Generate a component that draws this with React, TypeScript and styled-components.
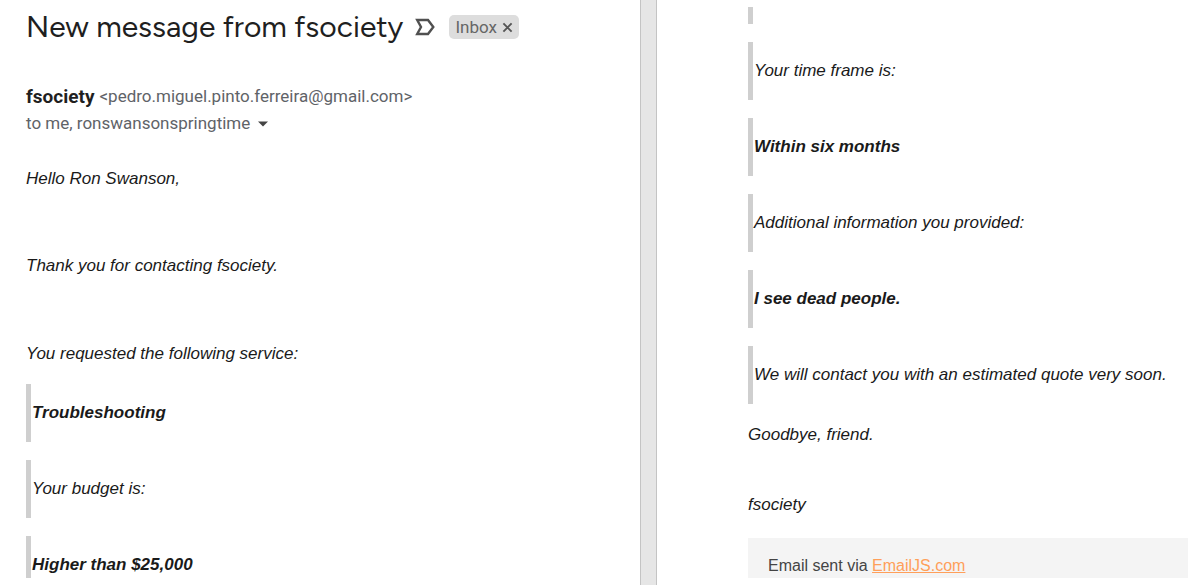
import React from "react";
import styled, { createGlobalStyle } from "styled-components";

const GlobalStyle = createGlobalStyle`
  *, *::before, *::after { box-sizing: border-box; }
  body { margin: 0; background: #fff; }
`;

const Page = styled.main`
  display: grid;
  grid-template-columns: 640fr 17px 531fr;
  min-height: 100vh;
  color: #1a1a1a;
  font: 17px/22px "Liberation Sans", Arial, sans-serif;
`;

const MessagePane = styled.section`
  min-width: 0;
  padding: 8px 24px 7px 26px;
`;

const ContinuedPane = styled.section`
  min-width: 0;
  padding: 7px 0 7px 91px;
`;

const Divider = styled.div`
  background: #e6e6e6;
  border: solid #c4c4c4;
  border-width: 0 1px;
`;

const TitleRow = styled.header`
  display: flex;
  align-items: center;
  height: 38px;
`;

const Title = styled.h1`
  margin: 0;
  color: #1f1f1f;
  font: 400 30px/38px "Google Sans", Figtree, Roboto, sans-serif;
  white-space: nowrap;
`;

const MarkerButton = styled.button`
  display: flex;
  margin: 0 14px 0 12px;
  padding: 0;
  border: 0;
  background: none;
`;

const InboxChip = styled.span`
  display: flex;
  align-items: center;
  gap: 5px;
  height: 24px;
  padding: 0 6px;
  border-radius: 5px;
  background: #ddd;
  color: #666;
  font: 17px/24px Roboto, sans-serif;
`;

const ChipRemove = styled.button`
  display: flex;
  padding: 0;
  border: 0;
  background: none;
`;

const Sender = styled.div`
  margin-top: 37px;
  color: #5f6368;
  font: 17px/27px Roboto, sans-serif;
  white-space: nowrap;
`;

const SenderLine = styled.div`
  display: flex;
  align-items: center;
`;

const SenderName = styled.strong`
  margin-right: 5px;
  color: #1f1f1f;
  font-size: 19px;
`;

const DetailsButton = styled.button`
  display: flex;
  margin-left: 8px;
  padding: 0;
  border: 0;
  background: none;
`;

const Paragraph = styled.p<{ $after: number }>`
  margin: 0 0 ${(p) => p.$after}px;
  font-style: italic;
  white-space: nowrap;
`;

const LeftBody = styled.div`
  margin-top: 31px;
`;

const QuoteList = styled.div`
  display: flex;
  flex-direction: column;
  gap: 18px;
`;

const Quote = styled.blockquote<{ $strong?: boolean; $cut?: boolean }>`
  margin: 0;
  padding: 18px 0 ${(p) => (p.$cut ? 2 : 18)}px 1px;
  border-left: 5px solid #cfcfcf;
  font-style: italic;
  font-weight: ${(p) => (p.$strong ? 700 : 400)};
  white-space: nowrap;
`;

const QuoteTail = styled.div`
  height: 17px;
  border-left: 5px solid #cfcfcf;
`;

const Closing = styled.div`
  margin-top: 20px;
`;

const Footer = styled.footer`
  padding: 17px 20px 1px;
  background: #f4f4f4;
  color: #444;
  font-size: 16px;
`;

const FooterLink = styled.a`
  color: #ff9f5a;
  text-decoration: underline;
`;

export default function App() {
  return (
    <>
      <GlobalStyle />
      <Page>
        <MessagePane>
          <TitleRow>
            <Title>New message from fsociety</Title>
            <MarkerButton aria-label="Mark as important">
              <svg width="20" height="18" viewBox="0 0 20 18" fill="none" stroke="#505050" strokeWidth="2.4">
                <path d="M2.2 2H13L18.3 9L13 16H2.2L6 9Z" />
              </svg>
            </MarkerButton>
            <InboxChip>
              Inbox
              <ChipRemove aria-label="Remove Inbox label">
                <svg width="11" height="11" viewBox="0 0 11 11" stroke="#555" strokeWidth="1.9">
                  <path d="M1.4 1.4L9.6 9.6M9.6 1.4L1.4 9.6" />
                </svg>
              </ChipRemove>
            </InboxChip>
          </TitleRow>
          <Sender>
            <SenderLine>
              <SenderName>fsociety</SenderName>
              <span>&lt;pedro.miguel.pinto.ferreira@gmail.com&gt;</span>
            </SenderLine>
            <SenderLine>
              to me, ronswansonspringtime
              <DetailsButton aria-label="Show details">
                <svg width="10" height="6" viewBox="0 0 10 6" fill="#444">
                  <path d="M0 0.5H10L5 5.5Z" />
                </svg>
              </DetailsButton>
            </SenderLine>
          </Sender>
          <LeftBody>
            <Paragraph $after={65}>Hello Ron Swanson,</Paragraph>
            <Paragraph $after={66}>Thank you for contacting fsociety.</Paragraph>
            <Paragraph $after={19}>You requested the following service:</Paragraph>
            <QuoteList>
              <Quote $strong>Troubleshooting</Quote>
              <Quote>Your budget is:</Quote>
              <Quote $strong $cut>Higher than $25,000</Quote>
            </QuoteList>
          </LeftBody>
        </MessagePane>
        <Divider />
        <ContinuedPane>
          <QuoteList>
            <QuoteTail />
            <Quote>Your time frame is:</Quote>
            <Quote $strong>Within six months</Quote>
            <Quote>Additional information you provided:</Quote>
            <Quote $strong>I see dead people.</Quote>
            <Quote>We will contact you with an estimated quote very soon.</Quote>
          </QuoteList>
          <Closing>
            <Paragraph $after={48}>Goodbye, friend.</Paragraph>
            <Paragraph $after={22}>fsociety</Paragraph>
          </Closing>
          <Footer>
            Email sent via <FooterLink href="#emailjs">EmailJS.com</FooterLink>
          </Footer>
        </ContinuedPane>
      </Page>
    </>
  );
}
